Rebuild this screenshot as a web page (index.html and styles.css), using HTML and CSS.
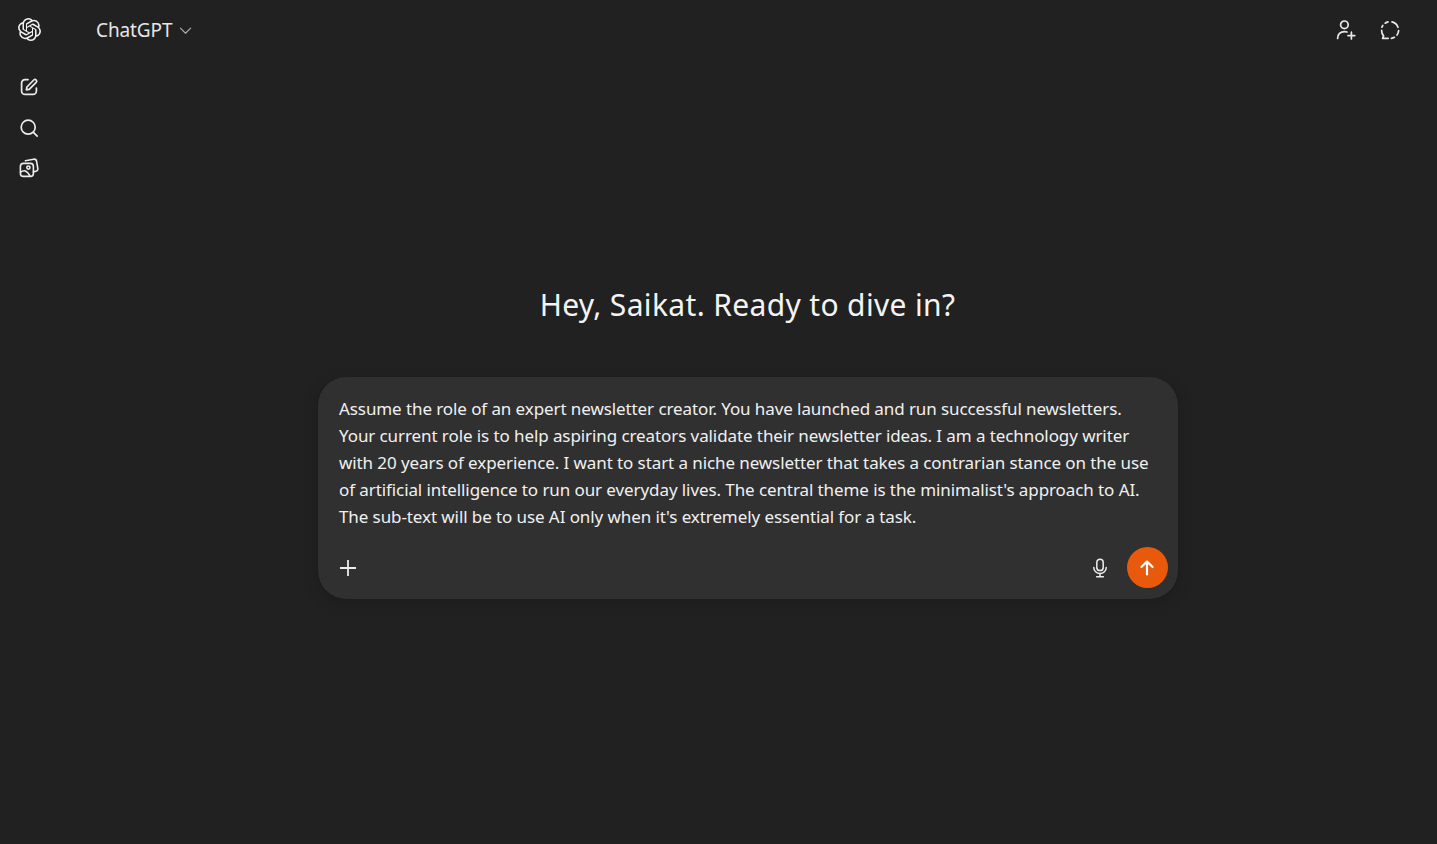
FILE: index.html
```html
<!DOCTYPE html>
<html lang="en">
<head>
<meta charset="utf-8">
<title>ChatGPT</title>
<link rel="stylesheet" href="styles.css">
</head>
<body>
<div class="app">
  <aside class="rail">
    <svg class="logo" viewBox="0 0 24 24" fill="currentColor">
      <path d="M22.2819 9.8211a5.9847 5.9847 0 0 0-.5157-4.9108 6.0462 6.0462 0 0 0-6.5098-2.9A6.0651 6.0651 0 0 0 4.9807 4.1818a5.9847 5.9847 0 0 0-3.9977 2.9 6.0462 6.0462 0 0 0 .7427 7.0966 5.98 5.98 0 0 0 .511 4.9107 6.051 6.051 0 0 0 6.5146 2.9001A5.9847 5.9847 0 0 0 13.2599 24a6.0557 6.0557 0 0 0 5.7718-4.2058 5.9894 5.9894 0 0 0 3.9977-2.9001 6.0557 6.0557 0 0 0-.7475-7.0729zm-9.022 12.6081a4.4755 4.4755 0 0 1-2.8764-1.0408l.1419-.0804 4.7783-2.7582a.7948.7948 0 0 0 .3927-.6813v-6.7369l2.02 1.1686a.071.071 0 0 1 .038.052v5.5826a4.504 4.504 0 0 1-4.4945 4.4944zm-9.6607-4.1254a4.4708 4.4708 0 0 1-.5346-3.0137l.142.0852 4.783 2.7582a.7712.7712 0 0 0 .7806 0l5.8428-3.3685v2.3324a.0804.0804 0 0 1-.0332.0615L9.74 19.9502a4.4992 4.4992 0 0 1-6.1408-1.6464zM2.3408 7.8956a4.485 4.485 0 0 1 2.3655-1.9728V11.6a.7664.7664 0 0 0 .3879.6765l5.8144 3.3543-2.0201 1.1685a.0757.0757 0 0 1-.071 0l-4.8303-2.7865A4.504 4.504 0 0 1 2.3408 7.872zm16.5963 3.8558L13.1038 8.364 15.1192 7.2a.0757.0757 0 0 1 .071 0l4.8303 2.7913a4.4944 4.4944 0 0 1-.6765 8.1042v-5.6772a.79.79 0 0 0-.407-.667zm2.0107-3.0231l-.142-.0852-4.7735-2.7818a.7759.7759 0 0 0-.7854 0L9.409 9.2297V6.8974a.0662.0662 0 0 1 .0284-.0615l4.8303-2.7866a4.4992 4.4992 0 0 1 6.6802 4.66zM8.3065 12.863l-2.02-1.1638a.0804.0804 0 0 1-.038-.0567V6.0742a4.4992 4.4992 0 0 1 7.3757-3.4537l-.142.0805L8.704 5.459a.7948.7948 0 0 0-.3927.6813zm1.0976-2.3654l2.602-1.4998 2.6069 1.4998v2.9994l-2.5974 1.4997-2.6067-1.4997Z"/>
    </svg>
    <nav class="rail-nav">
      <button class="rail-btn" aria-label="New chat">
        <svg viewBox="0 0 20 20" fill="none" stroke="currentColor" stroke-width="1.7" stroke-linecap="round" stroke-linejoin="round"><path d="M9 2.6H6a3.4 3.4 0 0 0-3.4 3.4v8A3.4 3.4 0 0 0 6 17.4h8a3.4 3.4 0 0 0 3.4-3.4V11"/><path d="M7.4 12.8 7.9 10 14.8 3a1.7 1.7 0 0 1 2.4 0 1.7 1.7 0 0 1 0 2.4L10.2 12.3Z"/></svg>
      </button>
      <button class="rail-btn" aria-label="Search">
        <svg viewBox="0 0 20 20" fill="none" stroke="currentColor" stroke-width="1.7" stroke-linecap="round"><circle cx="9.2" cy="9.2" r="7"/><path d="m14.4 14.4 3.8 3.8"/></svg>
      </button>
      <button class="rail-btn" aria-label="Library">
        <svg viewBox="0 0 20 20" fill="none" stroke="currentColor" stroke-width="1.6" stroke-linecap="round" stroke-linejoin="round"><rect x="1.4" y="5.4" width="13" height="13" rx="3"/><path d="M6.4 2.8 14.6 1.2a2.6 2.6 0 0 1 3 2.1l1.2 7a2.6 2.6 0 0 1-1.9 3l-2.5.6"/><circle cx="9.4" cy="9.6" r="1.6"/><path d="M1.6 14.2c3.2-2.6 6.4-2.2 9.4 4"/></svg>
      </button>
    </nav>
  </aside>
  <main class="main">
    <header class="topbar">
      <div class="model">
        <span class="model-name">ChatGPT</span>
        <svg class="chev" viewBox="0 0 14 14" fill="none" stroke="currentColor" stroke-width="1.3" stroke-linecap="round" stroke-linejoin="round"><path d="m1.5 4.5 5.5 5.5 5.5-5.5"/></svg>
      </div>
      <div class="top-actions">
        <svg class="top-icon" viewBox="0 0 22 22" fill="none" stroke="currentColor" stroke-width="1.7" stroke-linecap="round"><circle cx="9.4" cy="5.8" r="3.8"/><path d="M2.6 19.4c0-4.2 2.8-6.8 6.8-6.8 1 0 1.8.1 2.6.4"/><path d="M16.4 13.2v6.8M13 16.6h6.8"/></svg>
        <svg class="top-icon" viewBox="0 0 22 22" fill="none" stroke="currentColor" stroke-width="1.7" stroke-linecap="round" stroke-linejoin="round"><path d="M6.2 4.2A8.4 8.4 0 0 1 9 2.9"/><path d="M13 2.9a8.4 8.4 0 0 1 6 5.4"/><path d="M19.6 11.6a8.4 8.4 0 0 1-1.6 4.4"/><path d="M15.4 18.3a8.4 8.4 0 0 1-3 1.1"/><path d="M9.2 19.3H3.6l1-2.4a8.4 8.4 0 0 1-2-5.6"/><path d="M2.9 8.2a8.4 8.4 0 0 1 .9-1.7"/></svg>
      </div>
    </header>
    <section class="center">
      <h1 class="greeting">Hey, Saikat. Ready to dive in?</h1>
      <div class="composer">
        <p class="prompt">Assume the role of an expert newsletter creator. You have launched and run successful newsletters.<br>Your current role is to help aspiring creators validate their newsletter ideas. I am a technology writer<br>with 20 years of experience. I want to start a niche newsletter that takes a contrarian stance on the use<br>of artificial intelligence to run our everyday lives. The central theme is the minimalist's approach to AI.<br>The sub-text will be to use AI only when it's extremely essential for a task.</p>
        <div class="composer-bar">
          <svg class="plus" viewBox="0 0 18 18" fill="none" stroke="currentColor" stroke-width="1.8"><path d="M9 1v16M1 9h16"/></svg>
          <div class="composer-right">
            <svg class="mic" viewBox="0 0 20 20" fill="none" stroke="currentColor" stroke-width="1.5" stroke-linecap="round"><rect x="6.8" y="1.2" width="6.4" height="11.4" rx="3.2"/><path d="M3.8 9.4a6.2 6.2 0 0 0 12.4 0"/><path d="M10 15.6v3M6.6 18.8h6.8"/></svg>
            <button class="send" aria-label="Send">
              <svg viewBox="0 0 18 18" fill="none" stroke="currentColor" stroke-width="2.2" stroke-linecap="round" stroke-linejoin="round"><path d="M9 15.5V2.5M3.4 8 9 2.5 14.6 8"/></svg>
            </button>
          </div>
        </div>
      </div>
    </section>
  </main>
</div>
</body>
</html>
```
FILE: styles.css
```css
* { box-sizing: border-box; }
html, body { margin: 0; height: 100%; }
body {
  background: #212121;
  color: #ececec;
  font-family: "Noto Sans", "Open Sans", sans-serif;
  overflow: hidden;
}
.app { display: flex; height: 844px; }
.rail {
  width: 58px;
  flex: none;
  display: flex;
  flex-direction: column;
  align-items: center;
  padding-top: 17px;
}
.logo { width: 23px; height: 23px; margin-top: 1px; color: #f2f2f2; }
.rail-nav {
  display: flex;
  flex-direction: column;
  gap: 20.5px;
  margin-top: 36px;
}
.rail-btn {
  width: 20px;
  height: 20px;
  padding: 0;
  border: 0;
  background: none;
  color: #ececec;
  display: block;
}
.rail-btn svg { display: block; width: 20px; height: 20px; }
.main { flex: 1; display: flex; flex-direction: column; min-width: 0; }
.topbar {
  display: flex;
  justify-content: space-between;
  align-items: center;
  height: 60px;
  padding: 0 36px 0 38px;
}
.model { display: flex; align-items: center; gap: 7px; }
.model-name { font-size: 19px; color: #e6e6e6; letter-spacing: -0.1px; }
.chev { width: 13px; height: 13px; color: #a8a8a8; }
.top-actions { display: flex; align-items: center; gap: 22px; }
.top-icon { width: 22px; height: 22px; color: #e8e8e8; }
.center {
  display: flex;
  flex-direction: column;
  align-items: center;
  padding-top: 223px;
}
.greeting {
  margin: 0;
  font-size: 30px;
  font-weight: 400;
  line-height: 44px;
  color: #f4f4f4;
  letter-spacing: 0.35px;
}
.composer {
  width: 860px;
  height: 222px;
  margin-top: 50px;
  background: #303030;
  border-radius: 28px;
  box-shadow: 0 4px 16px rgba(0, 0, 0, 0.14), 0 0 1px rgba(0, 0, 0, 0.3);
  padding: 18px 10px 11px 21px;
  display: flex;
  flex-direction: column;
  justify-content: space-between;
}
.prompt {
  margin: 0;
  padding-left: 0.5px;
  font-size: 17px;
  line-height: 27px;
  letter-spacing: -0.09px;
  color: #f0f0f0;
  white-space: nowrap;
}
.composer-bar { display: flex; align-items: center; justify-content: space-between; height: 41px; }
.plus { width: 18px; height: 18px; color: #ececec; }
.composer-right { display: flex; align-items: center; gap: 17px; }
.mic { width: 20px; height: 20px; color: #ececec; }
.send {
  width: 41px;
  height: 41px;
  border: 0;
  padding: 0;
  border-radius: 50%;
  background: #e8590c;
  color: #fff;
  display: flex;
  align-items: center;
  justify-content: center;
}
.send svg { width: 18px; height: 18px; }
```
